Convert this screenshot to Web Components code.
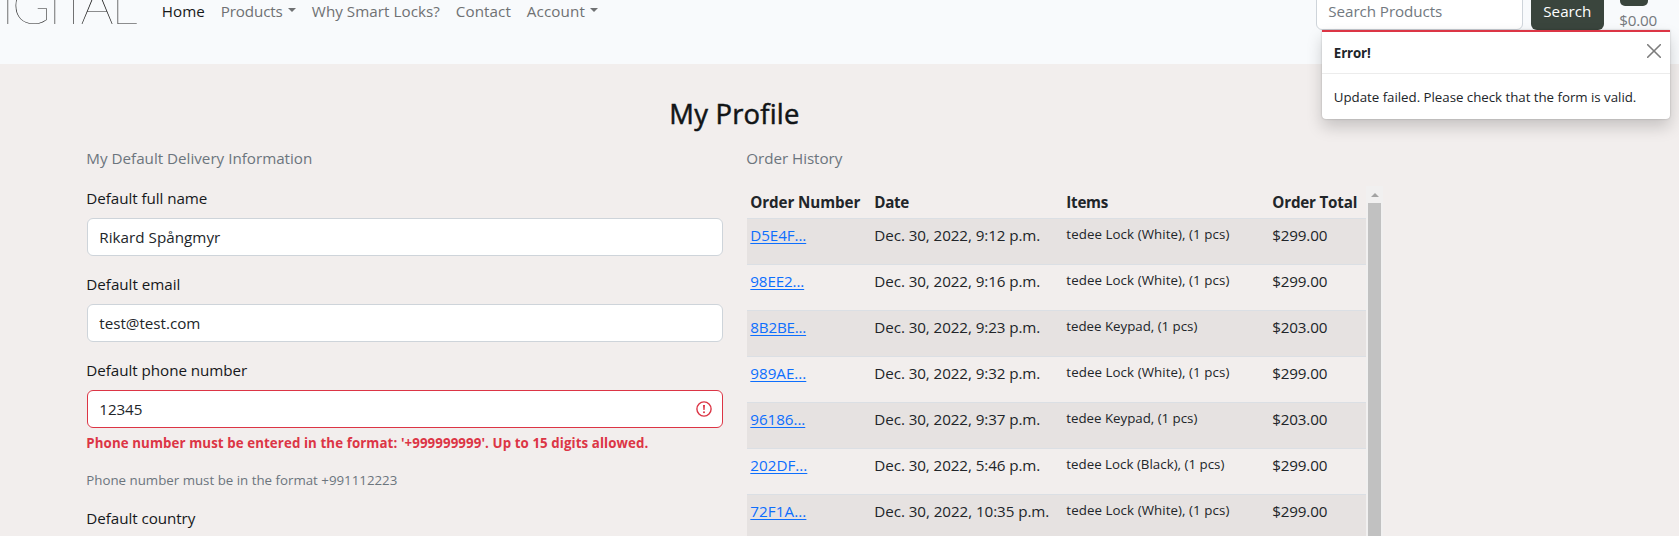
<!DOCTYPE html>
<html lang="en">
<head>
<meta charset="utf-8">
<title>My Profile</title>
<style>
html,body{margin:0;height:536px;overflow:hidden;background:#f2eeed}
body{font:15.2px/24px "Open Sans","Noto Sans",sans-serif;color:#212529}
</style>
</head>
<body>
<profile-page></profile-page>
<script>
const define = (name, html, setup) => {
  const template = document.createElement('template');
  template.innerHTML = html;
  customElements.define(name, class extends HTMLElement {
    connectedCallback() {
      if (this.shadowRoot) return;
      this.attachShadow({ mode: 'open' }).append(template.content.cloneNode(true));
      if (setup) setup(this, this.shadowRoot);
    }
  });
};

/* Text whose tracking is tuned so that it spans w pixels */
define('fit-text', `<style>:host{display:inline-block;white-space:nowrap;vertical-align:top;margin-left:-.7px}</style><slot></slot>`, el => {
  const width = +el.getAttribute('w');
  const count = el.textContent.length;
  const natural = el.getBoundingClientRect().width;
  if (width && natural && count > 1) {
    el.style.letterSpacing = (width - natural) / (count - 1) + 'px';
    el.style.width = width + 'px';
  }
});

define('nav-link', `<style>
:host{display:flex;height:24px;color:#6f7173;margin-right:16.7px}
:host([active]){color:#17191a}
i{display:none;width:0;height:0;border:4.8px solid transparent;border-top-color:currentColor;border-bottom:0;margin:9px 0 0 5px}
:host([menu]) i{display:block}
</style><slot></slot><i></i>`);

define('brand-logo', `<style>
:host{display:grid;grid-template-columns:10.5px 36.5px 10px 22px 31px 27px;font:100 52px/60px Lato,"Open Sans",sans-serif;color:#222;margin:-26px 0 0 1.5px;width:161px;height:60px}
</style><span>I</span><span>G</span><span>I</span><span>T</span><span>A</span><span>L</span>`);

define('site-header', `<style>
:host{display:flex;align-items:flex-start;height:64px;background:#f8fafc;overflow:hidden}
nav{display:flex;margin-top:-1px;flex:1}
.search{box-sizing:border-box;width:207px;height:38px;margin:-8px 8px 0 0;padding:6px 12px;border:1px solid #ced4da;border-radius:6px;background:#fff;color:#72797f}
.btn{box-sizing:border-box;width:73px;height:38px;margin:-8px 16px 0 0;padding:7px 13px;border-radius:6px;background:#3a453d;color:#fff}
.cart{width:59px;color:#75797d}
.badge{width:28px;height:16px;margin-top:-10px;border-radius:5px;background:#3a453d}
.total{margin-top:2px}
</style>
<brand-logo></brand-logo>
<nav>
<nav-link active><fit-text w="43">Home</fit-text></nav-link>
<nav-link menu><fit-text w="62">Products</fit-text></nav-link>
<nav-link><fit-text w="128">Why Smart Locks?</fit-text></nav-link>
<nav-link><fit-text w="55">Contact</fit-text></nav-link>
<nav-link menu><fit-text w="58">Account</fit-text></nav-link>
</nav>
<div class="search"><fit-text w="114">Search Products</fit-text></div>
<div class="btn"><fit-text w="48">Search</fit-text></div>
<div class="cart"><div class="badge"></div><div class="total"><fit-text w="38">$0.00</fit-text></div></div>`);

define('error-toast', `<style>
:host{position:absolute;left:1322px;top:30px;width:348px;height:89px;box-sizing:border-box;border-top:2px solid #dc3545;border-radius:0 0 4px 4px;background:#fff;box-shadow:0 8px 16px rgba(0,0,0,.18),0 0 2px rgba(0,0,0,.25);font-size:13.3px;line-height:21px}
header{display:flex;justify-content:space-between;height:41px;border-bottom:1px solid #ececec;padding:0 9px 0 12.5px;font-weight:700}
header fit-text{margin-top:11px}
svg{display:block;width:14px;height:14px;margin-top:12px}
p{margin:0;padding:13px 12.5px}
</style>
<header><fit-text w="37">Error!</fit-text><svg viewBox="0 0 14 14"><path d="M.7.7l12.6 12.6M13.3.7L.7 13.3" stroke="#7c7c7c" stroke-width="1.6" stroke-linecap="round"/></svg></header>
<p><fit-text w="302.5">Update failed. Please check that the form is valid.</fit-text></p>`);

define('form-field', `<style>
:host{display:block}
.label{height:24px;margin-bottom:8px;color:#16181b}
.box{box-sizing:border-box;display:flex;align-items:center;justify-content:space-between;height:38px;padding:0 10px 0 12px;border:1px solid #ced4da;border-radius:6px;background:#fff}
:host([invalid]) .box{border-color:#dc3545}
svg{display:none;width:16px;height:16px}
:host([invalid]) svg{display:block}
</style>
<div class="label"><slot name="label"></slot></div>
<div class="box"><slot></slot><svg viewBox="0 0 16 16"><circle cx="8" cy="8" r="7.1" fill="none" stroke="#dc3545" stroke-width="1.4"/><path d="M7 4h2l-.4 5H7.4z" fill="#dc3545"/><circle cx="8" cy="11.2" r="1" fill="#dc3545"/></svg></div>`);

define('delivery-form', `<style>
:host{display:block;width:636px}
.title{color:#6c757d;height:24px;margin-bottom:16px}
form-field{margin-bottom:16px}
form-field[invalid]{margin-bottom:5px}
.error,.help{font-size:13.3px;line-height:21px;height:21px}
.error{font-weight:700;color:#dc3545;margin-bottom:16px}
.help{color:#6c757d;margin-bottom:15px}
</style>
<div class="title"><fit-text w="226">My Default Delivery Information</fit-text></div>
<form-field><fit-text slot="label" w="121">Default full name</fit-text><fit-text w="121">Rikard Spångmyr</fit-text></form-field>
<form-field><fit-text slot="label" w="94">Default email</fit-text><fit-text w="101">test@test.com</fit-text></form-field>
<form-field invalid><fit-text slot="label" w="161">Default phone number</fit-text><fit-text w="43">12345</fit-text></form-field>
<div class="error"><fit-text w="562">Phone number must be entered in the format: '+999999999'. Up to 15 digits allowed.</fit-text></div>
<div class="help"><fit-text w="311">Phone number must be in the format +991112223</fit-text></div>
<form-field><fit-text slot="label" w="109">Default country</fit-text></form-field>`);

define('order-row', `<style>
:host{display:grid;grid-template-columns:124px 192px 206px 93px;box-sizing:border-box;height:46px;padding:4px 0 0 4px;border-bottom:1px solid #dbdfe4}
:host([head]){height:33px;font-weight:700;border-color:#dbdfe4}
:host([striped]){background:#e6e2e1}
::slotted([slot=number]){color:#0d6efd;text-decoration:underline;text-decoration-thickness:1px;text-underline-offset:2px}
::slotted([slot=items]){font-size:13.3px;line-height:21px;margin-top:1px}
</style>
<div><slot name="number"></slot><slot name="h1"></slot></div><div><slot name="date"></slot></div><div><slot name="items"></slot><slot name="h2"></slot></div><div><slot name="total"></slot></div>`);

define('scroll-bar', `<style>
:host{display:flex;flex-direction:column;align-items:center;width:17px;background:#f1f0f0}
i{width:0;height:0;border:4px solid transparent;border-bottom-color:#a3a3a3;border-top:0;margin:7px 0 6px}
b{width:13px;flex:1;background:#c1c1c1}
</style><i></i><b></b>`);

define('order-history', `<style>
:host{display:block;width:636px}
.title{color:#6c757d;height:24px;margin-bottom:16px}
.pane{display:flex;height:350px}
.rows{width:619px;overflow:hidden}
</style>
<div class="title"><fit-text w="96">Order History</fit-text></div>
<div class="pane"><div class="rows">
<order-row head><fit-text slot="h1" w="110">Order Number</fit-text><fit-text slot="date" w="35">Date</fit-text><fit-text slot="h2" w="42">Items</fit-text><fit-text slot="total" w="85">Order Total</fit-text></order-row>
</div><scroll-bar></scroll-bar></div>`, (el, root) => {
  const orders = [
    ['D5E4F...', 56, '9:12', 'tedee Lock (White), (1 pcs)', '$299.00'],
    ['98EE2...', 54, '9:16', 'tedee Lock (White), (1 pcs)', '$299.00'],
    ['8B2BE...', 56, '9:23', 'tedee Keypad, (1 pcs)', '$203.00'],
    ['989AE...', 56, '9:32', 'tedee Lock (White), (1 pcs)', '$299.00'],
    ['96186...', 55, '9:37', 'tedee Keypad, (1 pcs)', '$203.00'],
    ['202DF...', 57, '5:46', 'tedee Lock (Black), (1 pcs)', '$299.00'],
    ['72F1A...', 56, '10:35', 'tedee Lock (White), (1 pcs)', '$299.00']
  ];
  const itemWidth = text => text.includes('White') ? 163 : text.includes('Black') ? 158 : 131;
  root.querySelector('.rows').insertAdjacentHTML('beforeend', orders.map(([id, w, time, item, total], i) =>
    `<order-row ${i % 2 ? '' : 'striped'}><fit-text slot="number" w="${w}">${id}</fit-text><fit-text slot="date" w="${time.length > 4 ? 175 : 166}">Dec. 30, 2022, ${time} p.m.</fit-text><fit-text slot="items" w="${itemWidth(item)}">${item}</fit-text><fit-text slot="total" w="55">${total}</fit-text></order-row>`).join(''));
});

define('profile-page', `<style>
:host{display:block;height:536px;overflow:hidden}
h1{margin:0;padding:33px 0 0 670px;font-size:27.4px;line-height:34px;font-weight:400;-webkit-text-stroke:.5px #111416;height:34px;color:#111416}
.columns{display:flex;gap:24px;padding:15px 0 0 87px}
</style>
<site-header></site-header>
<h1><fit-text w="130">My Profile</fit-text></h1>
<div class="columns"><delivery-form></delivery-form><order-history></order-history></div>
<error-toast></error-toast>`);

</script>
</body>
</html>
